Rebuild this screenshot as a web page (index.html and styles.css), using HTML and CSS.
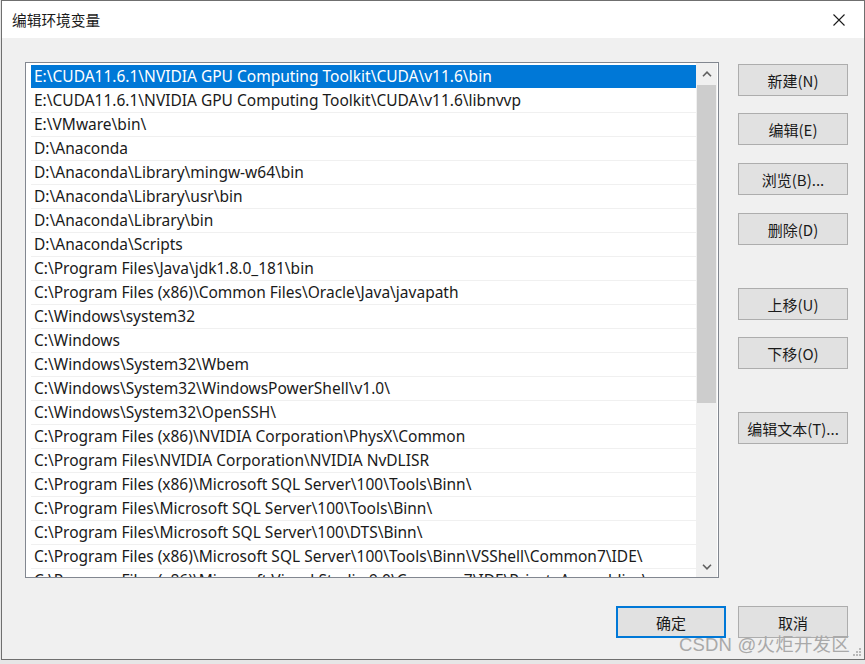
FILE: index.html
```html
<!DOCTYPE html>
<html lang="zh-CN">
<head>
<meta charset="utf-8">
<title>编辑环境变量</title>
<link rel="stylesheet" href="styles.css">
</head>
<body>
<div class="window">
  <div class="titlebar">
    <span class="title">编辑环境变量</span>
    <svg class="close" width="12" height="12" viewBox="0 0 12 12"><path d="M0.5 0.5 L11.5 11.5 M11.5 0.5 L0.5 11.5" stroke="#1a1a1a" stroke-width="1.1" fill="none"/></svg>
  </div>
  <div class="content">
    <div class="main">
      <div class="listbox">
        <ul class="items">
          <li class="item selected">E:\CUDA11.6.1\NVIDIA GPU Computing Toolkit\CUDA\v11.6\bin</li>
          <li class="item">E:\CUDA11.6.1\NVIDIA GPU Computing Toolkit\CUDA\v11.6\libnvvp</li>
          <li class="item">E:\VMware\bin\</li>
          <li class="item">D:\Anaconda</li>
          <li class="item">D:\Anaconda\Library\mingw-w64\bin</li>
          <li class="item">D:\Anaconda\Library\usr\bin</li>
          <li class="item">D:\Anaconda\Library\bin</li>
          <li class="item">D:\Anaconda\Scripts</li>
          <li class="item">C:\Program Files\Java\jdk1.8.0_181\bin</li>
          <li class="item">C:\Program Files (x86)\Common Files\Oracle\Java\javapath</li>
          <li class="item">C:\Windows\system32</li>
          <li class="item">C:\Windows</li>
          <li class="item">C:\Windows\System32\Wbem</li>
          <li class="item">C:\Windows\System32\WindowsPowerShell\v1.0\</li>
          <li class="item">C:\Windows\System32\OpenSSH\</li>
          <li class="item">C:\Program Files (x86)\NVIDIA Corporation\PhysX\Common</li>
          <li class="item">C:\Program Files\NVIDIA Corporation\NVIDIA NvDLISR</li>
          <li class="item">C:\Program Files (x86)\Microsoft SQL Server\100\Tools\Binn\</li>
          <li class="item">C:\Program Files\Microsoft SQL Server\100\Tools\Binn\</li>
          <li class="item">C:\Program Files\Microsoft SQL Server\100\DTS\Binn\</li>
          <li class="item">C:\Program Files (x86)\Microsoft SQL Server\100\Tools\Binn\VSShell\Common7\IDE\</li>
          <li class="item">C:\Program Files (x86)\Microsoft Visual Studio 9.0\Common7\IDE\PrivateAssemblies\</li>
        </ul>
        <div class="scrollbar">
          <div class="arrow">
            <svg width="10" height="6" viewBox="0 0 10 6"><path d="M1 5.2 L5 1.2 L9 5.2" stroke="#606060" stroke-width="1.6" fill="none"/></svg>
          </div>
          <div class="track"><div class="thumb"></div></div>
          <div class="arrow">
            <svg width="10" height="6" viewBox="0 0 10 6"><path d="M1 0.8 L5 4.8 L9 0.8" stroke="#606060" stroke-width="1.6" fill="none"/></svg>
          </div>
        </div>
      </div>
      <div class="side">
        <button class="btn">新建(N)</button>
        <button class="btn gap-s">编辑(E)</button>
        <button class="btn gap-m">浏览(B)...</button>
        <button class="btn gap-m">删除(D)</button>
        <button class="btn gap-l">上移(U)</button>
        <button class="btn gap-s">下移(O)</button>
        <button class="btn gap-l">编辑文本(T)...</button>
      </div>
    </div>
    <div class="footer">
      <button class="btn primary">确定</button>
      <button class="btn">取消</button>
    </div>
    <div class="watermark">CSDN @火炬开发区</div>
    <svg class="grip" width="10" height="10" viewBox="0 0 10 10">
      <rect x="7" y="1" width="2" height="2" fill="#b8b8b8"/>
      <rect x="4" y="4" width="2" height="2" fill="#b8b8b8"/>
      <rect x="7" y="4" width="2" height="2" fill="#b8b8b8"/>
      <rect x="1" y="7" width="2" height="2" fill="#b8b8b8"/>
      <rect x="4" y="7" width="2" height="2" fill="#b8b8b8"/>
      <rect x="7" y="7" width="2" height="2" fill="#b8b8b8"/>
    </svg>
  </div>
</div>
</body>
</html>
```
FILE: styles.css
```css
html, body {
  margin: 0;
  padding: 0;
}
body {
  width: 865px;
  height: 664px;
  background: #e6e6e6;
  font-family: "Noto Sans CJK SC", "Noto Sans", sans-serif;
  overflow: hidden;
}
.window {
  box-sizing: border-box;
  margin-left: 1px;
  width: 864px;
  height: 660px;
  border: 1px solid #6f6f6f;
  background: #f0f0f0;
  display: flex;
  flex-direction: column;
}
.titlebar {
  height: 37px;
  background: #ffffff;
  display: flex;
  align-items: center;
  justify-content: space-between;
  padding: 0 19px 0 10px;
  flex: none;
}
.title {
  font-size: 14.7px;
  color: #1a1a1a;
}
.close {
  display: block;
}
.content {
  position: relative;
  flex: 1;
  padding: 24px 0 0 23px;
}
.main {
  display: flex;
  align-items: flex-start;
}
.listbox {
  box-sizing: border-box;
  width: 694px;
  height: 516px;
  border: 1px solid #828790;
  background: #ffffff;
  display: flex;
  overflow: hidden;
}
.items {
  list-style: none;
  margin: 0;
  padding: 2px 0 0 5px;
  flex: 1;
  min-width: 0;
  overflow: hidden;
}
.item {
  height: 23px;
  line-height: 23px;
  border-bottom: 1px solid #f0f0f0;
  font-family: "Noto Sans", sans-serif;
  font-size: 15.5px;
  color: #1a1a1a;
  padding-left: 3px;
  white-space: nowrap;
  overflow: hidden;
}
.item.selected {
  background: #0078d7;
  color: #ffffff;
  border-bottom-color: #ffffff;
}
.scrollbar {
  width: 21px;
  flex: none;
  background: #f0f0f0;
  display: flex;
  flex-direction: column;
  margin: 0 1px 0 0;
}
.arrow {
  height: 21px;
  display: flex;
  align-items: center;
  justify-content: center;
  flex: none;
}
.track {
  flex: 1;
}
.thumb {
  margin: 1px 1px 0 1px;
  height: 318px;
  background: #cdcdcd;
}
.side {
  margin-left: 19px;
  display: flex;
  flex-direction: column;
  padding-top: 2px;
}
.btn {
  box-sizing: border-box;
  width: 110px;
  height: 32px;
  background: #e1e1e1;
  border: 1px solid #adadad;
  font-family: "Noto Sans CJK SC", sans-serif;
  font-size: 15px;
  color: #1a1a1a;
  padding: 0;
  display: flex;
  align-items: center;
  justify-content: center;
}
.gap-s { margin-top: 17px; }
.gap-m { margin-top: 18px; }
.gap-l { margin-top: 43px; }
.footer {
  display: flex;
  justify-content: flex-end;
  gap: 12px;
  margin-top: 28px;
  padding-right: 16px;
}
.btn.primary {
  border: 2px solid #0078d7;
}
.watermark {
  position: absolute;
  right: 14px;
  bottom: 3px;
  font-family: "Liberation Sans", "Noto Sans CJK SC", sans-serif;
  font-size: 18.5px;
  color: #a9a9a9;
  letter-spacing: 0.2px;
}
.grip {
  position: absolute;
  right: 2px;
  bottom: 2px;
}
```
